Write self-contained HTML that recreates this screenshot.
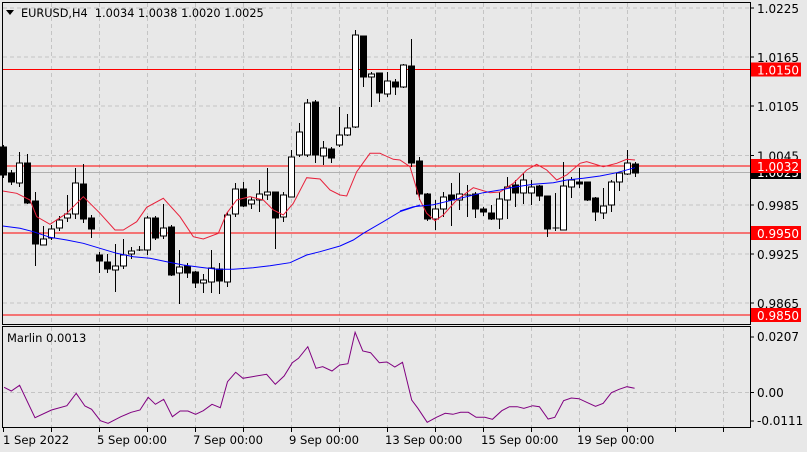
<!DOCTYPE html>
<html><head><meta charset="utf-8"><style>
html,body{margin:0;padding:0;background:#e8e8e8;width:807px;height:452px;overflow:hidden}
svg{display:block;font-family:Tahoma,"DejaVu Sans","Liberation Sans",sans-serif}
</style></head><body>
<svg id="s" width="807" height="452" xmlns="http://www.w3.org/2000/svg"></svg>
<script>
var s=document.getElementById('s'),h='';
function L(x1,y1,x2,y2,c,w,d){h+='<line x1="'+x1+'" y1="'+y1+'" x2="'+x2+'" y2="'+y2+'" stroke="'+c+'" stroke-width="'+(w||1)+'"'+(d?' stroke-dasharray="'+d+'"':'')+'/>';}
function T(x,y,t,c,sz,a){h+='<text x="'+x+'" y="'+y+'" fill="'+(c||'#000')+'" font-size="'+(sz||12)+'"'+(a?' text-anchor="'+a+'"':'')+'>'+t+'</text>';}
h+='<rect width="807" height="452" fill="#e8e8e8"/>';
for(var x=51.5;x<750;x+=48){L(x,3,x,324,'#c4c4c4',1,'4,3');L(x,327,x,427,'#c4c4c4',1,'4,3');}
var gy=[8,57,106,155.5,205,254,303];
gy.forEach(function(y){L(3,y,750,y,'#c4c4c4',1,'4,3');});
L(3,392.5,750,392.5,'#c4c4c4',1,'4,3');
L(3,172.5,750,172.5,'#b0b0b0',1);
[69.5,166,233,315].forEach(function(y){L(3,y,750,y,'#ff0000',1);});
var C=[[147,175,145,178],[173,182,170,185],[183,163,152,187],[163,203,154,204],[201,244,192,266],[245,239,226,245],[238,229,225,240],[228,220,216,231],[218,214,195,222],[214,183,168,219],[184,219,164,223],[218,229,215,238],[255,261,252,273],[262,269,254,273],[270,266,244,292],[266,255,239,269],[254,251,247,259],[250,250,246,251],[250,218,216,255],[218,238,216,240],[236,228,204,239],[227,275,225,276],[273,267,250,304],[266,273,263,278],[272,283,271,288],[283,280,274,293],[282,268,250,293],[269,281,263,294],[282,215,212,287],[214,189,183,217],[189,206,182,207],[204,200,197,209],[200,194,180,212],[195,192,168,200],[192,218,192,249],[217,195,192,222],[197,157,150,197],[155,132,123,157],[155,103,99,157],[102,155,100,163],[156,148,141,165],[149,158,147,163],[145,135,107,147],[135,128,114,136],[127,35,30,128],[36,77,36,87],[77,74,72,107],[73,93,73,102],[94,81,72,97],[82,87,79,95],[87,65,64,88],[66,163,39,167],[161,194,157,200],[194,219,193,221],[219,209,200,230],[209,197,192,217],[195,200,183,226],[200,194,173,210],[195,195,185,217],[194,209,192,218],[209,212,207,216],[213,219,205,220],[219,199,192,229],[200,187,177,219],[185,193,180,207],[193,180,173,204],[193,187,180,205],[186,196,185,201],[196,229,196,237],[228,228,193,231],[230,186,162,230],[187,180,177,198],[182,184,168,188],[182,200,182,201],[198,212,197,221],[213,206,188,219],[205,182,180,212],[182,173,173,191],[174,163,150,175],[164,173,162,177]];
C.forEach(function(c,i){var x=Math.round(3.3+8*i)+0.5,up=c[1]<c[0],t=Math.min(c[0],c[1]),b=Math.max(c[0],c[1]);
L(x,c[2],x,c[3],'#000',1);
if(b-t<1){L(x-3,t,x+4,t,'#000',1);}else
h+='<rect x="'+(x-3)+'" y="'+t+'" width="6" height="'+(b-t)+'" fill="'+(up?'#fff':'#000')+'" stroke="#000" stroke-width="1"/>';});
function P(pts,c,sx,sy,ox,oy){var p=pts.map(function(q){return (ox+q[0]/sx).toFixed(1)+','+(oy+q[1]/sy).toFixed(1)}).join(' ');h+='<polyline points="'+p+'" fill="none" stroke="'+c+'" stroke-width="1"/>';}
P([[8,573],[50,580],[90,600],[110,650],[150,673],[200,640],[250,590],[300,640],[345,690],[370,690],[410,665],[440,622],[490,595],[540,650],[580,710],[610,717],[655,700],[680,640],[710,600],[750,590],[790,600],[820,630],[850,645],[880,610],[920,533],[960,537],[990,570],[1020,585],[1040,588],[1070,515],[1110,460],[1140,460],[1180,478],[1200,480],[1230,500],[1260,600]],'#e8203a',3,3,0,0);
P([[60,600],[80,640],[105,662],[130,645],[170,600],[220,563],[270,578],[300,576],[340,550],[380,510],[410,493],[440,510],[470,540],[500,525],[540,490],[560,485],[610,500],[650,490],[680,478],[705,480]],'#e8203a',3,3,400,0);
P([[8,678],[60,685],[100,695],[150,712],[200,720],[250,730],[300,745],[350,760],[400,770],[450,775],[500,785],[550,795],[600,802],[650,808],[700,808],[760,803],[810,797],[870,788],[920,765],[960,755],[1020,738],[1060,720],[1090,700],[1150,665],[1200,635],[1260,615]],'#0000ff',3,3,0,0);
P([[0,633],[40,620],[100,614],[150,602],[200,590],[250,578],[300,570],[350,560],[400,553],[460,548],[500,540],[550,535],[600,528],[650,518],[705,503]],'#0000ff',3,3,400,0);
P([[8,232],[22,243],[38,226],[68,323],[100,300],[130,287],[148,250],[165,288],[178,298],[195,332],[210,340],[235,320],[255,307],[272,300],[288,262],[302,283],[318,268],[335,320],[350,303],[365,303],[380,313],[395,302],[412,283],[428,293],[442,215],[458,187],[472,205],[490,200],[518,193],[535,223],[552,198],[568,158],[580,145],[598,110],[614,175],[627,170],[645,183],[660,165],[676,161],[690,67],[705,123],[720,128],[737,158],[752,156],[767,171],[782,157],[800,270],[812,295],[830,337],[848,322],[865,310],[880,313],[895,307],[910,307],[925,322],[942,322],[957,328],[975,302],[990,290],[1005,290],[1018,295],[1035,287],[1048,290],[1065,327],[1078,322],[1095,272],[1110,264],[1125,266],[1140,277],[1157,289],[1172,280],[1188,248],[1203,238],[1218,230],[1233,235]],'#800080',1.943,3,0,310);
h+='<rect x="2.5" y="2.5" width="748" height="322" fill="none" stroke="#000"/>';
h+='<rect x="2.5" y="326.5" width="748" height="101" fill="none" stroke="#000"/>';
var lab=[[8,'1.0225'],[57,'1.0165'],[106,'1.0105'],[155.5,'1.0045'],[205,'0.9985'],[254,'0.9925'],[303,'0.9865']];
lab.forEach(function(l){L(750,l[0],754,l[0],'#000');T(757,l[0]+5,l[1],'#000',12);});
h+='<rect x="751" y="166" width="50" height="13" fill="#000"/>';T(757,177,'1.0025','#fff',12);
[[69.5,'1.0150'],[166,'1.0032'],[233,'0.9950'],[315,'0.9850']].forEach(function(l){h+='<rect x="751" y="'+(l[0]-7)+'" width="50" height="14" fill="#ff0000"/>';T(757,l[0]+5,l[1],'#fff',12);});
h+='<rect x="751" y="322" width="56" height="4" fill="#e8e8e8"/>';
L(750,337,754,337,'#000');T(757,341,'0.0207','#000',12);
L(750,392.5,754,392.5,'#000');T(757,397,'0.00','#000',12);
L(750,421,754,421,'#000');T(757,425,'-0.0111','#000',12);
h+='<polygon points="6,10 14,10 10,15" fill="#000"/>';
T(21,17,'EURUSD,H4&#160;&#160;1.0034 1.0038 1.0020 1.0025','#000',11.3);
T(7,342,'Marlin 0.0013','#000',11.5);
for(var x=3.5;x<750;x+=48)L(x,428,x,432,'#000');
[[3,'1 Sep 2022'],[97,'5 Sep 00:00'],[193,'7 Sep 00:00'],[289,'9 Sep 00:00'],[385,'13 Sep 00:00'],[481,'15 Sep 00:00'],[577,'19 Sep 00:00']].forEach(function(l){T(l[0],444,l[1],'#000',11.6);});
s.innerHTML=h;
</script>
</body></html>
